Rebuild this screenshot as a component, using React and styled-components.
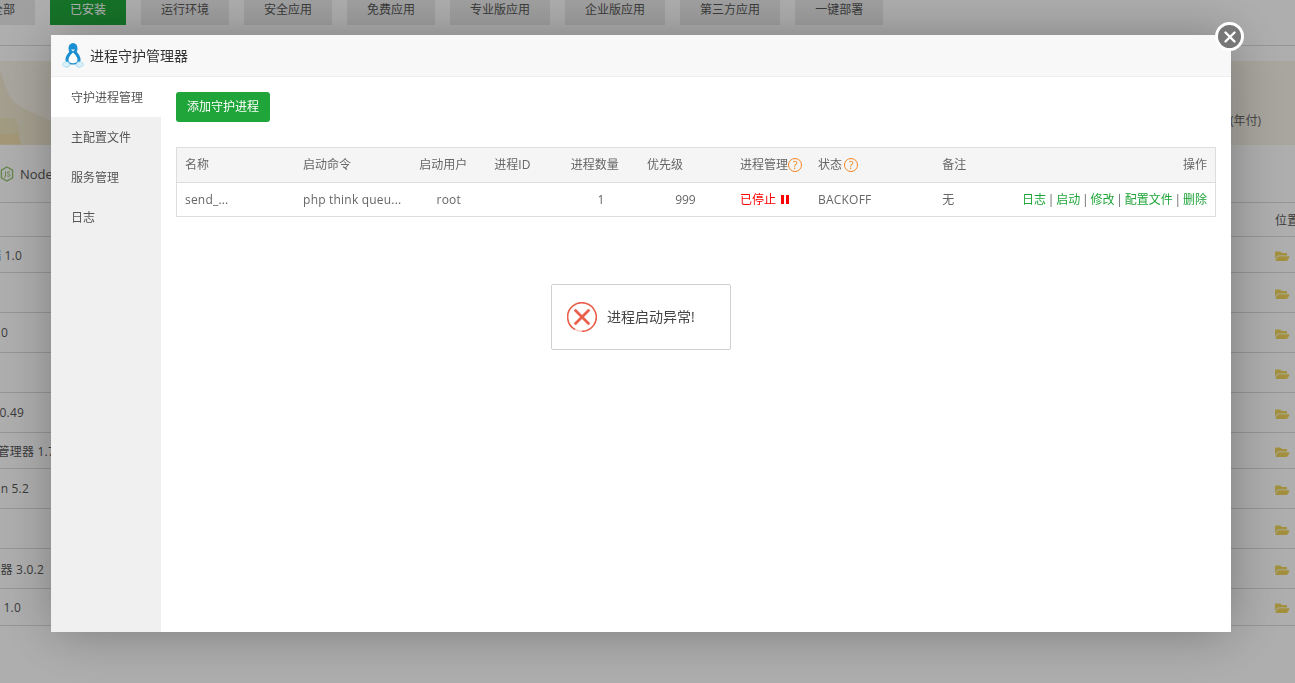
import React from 'react'
import styled, { createGlobalStyle } from 'styled-components'
import { FaFolderOpen } from 'react-icons/fa'

const GlobalStyle = createGlobalStyle`
  html, body {
    margin: 0;
    padding: 0;
    height: 100%;
    overflow: hidden;
    background: #fafafa;
    font-family: "Open Sans", "Noto Sans CJK SC", sans-serif;
    font-size: 12px;
    color: #666;
  }
  * { box-sizing: border-box; }
`;

const Page = styled.div`
  width: 1295px;
  height: 683px;
  overflow: hidden;
  background: #fafafa;
`;

const Tabs = styled.div`
  display: flex;
  gap: 15px;
  margin-left: -29px;
  height: 25px;
`;

const Tab = styled.div`
  padding: 0 20px;
  height: 25px;
  line-height: 20px;
  background: ${(props) => (props.$active ? '#20a53a' : '#e6e6e6')};
  color: ${(props) => (props.$active ? '#fff' : '#555')};
`;

const Rule = styled.div`
  height: 1px;
  margin-top: 20px;
  background: #d6d6d6;
`;

const Banner = styled.div`
  position: relative;
  height: 84px;
  margin-top: 15px;
  display: flex;
  justify-content: flex-end;
  align-items: center;
  padding: 34px 34px 0 0;
  color: #666;
  background: #f2eee4;
`;

const BannerArt = styled.svg`
  position: absolute;
  left: 0;
  top: 0;
`;

const PluginLine = styled.div`
  height: 58px;
  display: flex;
  align-items: center;
  gap: 6px;
  font-size: 13px;
  color: #555;
  border-bottom: 1px solid #d6d6d6;
`;

const Row = styled.div`
  height: ${(props) => props.$height}px;
  display: flex;
  justify-content: space-between;
  align-items: center;
  border-bottom: 1px solid #d6d6d6;
  font-size: 12px;
  letter-spacing: 0.2px;
  color: #555;
`;

const RowName = styled.div`
  width: ${(props) => props.$end}px;
  display: flex;
  justify-content: flex-end;
  white-space: nowrap;
`;

const RowEnd = styled.div`
  width: 20px;
  padding-top: 3px;
  overflow: hidden;
  white-space: nowrap;
  color: #e8cf58;
  display: flex;
`;

const HeadEnd = styled(RowEnd)`
  padding-top: 0;
  color: #555;
`;

const Overlay = styled.div`
  position: fixed;
  inset: 0;
  background: rgba(0, 0, 0, 0.3);
`;

const Modal = styled.div`
  position: fixed;
  left: 51px;
  top: 35px;
  width: 1180px;
  height: 597px;
  background: #fff;
  box-shadow: 1px 1px 50px rgba(0, 0, 0, 0.3);
  display: flex;
  flex-direction: column;
`;

const ModalTitle = styled.div`
  height: 42px;
  flex: none;
  display: flex;
  align-items: center;
  gap: 6px;
  padding-left: 11px;
  background: #f8f8f8;
  border-bottom: 1px solid #eee;
  font-size: 14px;
  color: #333;
`;

const TitleText = styled.span`
  margin-bottom: 2px;
`;

const CloseButton = styled.div`
  position: absolute;
  right: -13px;
  top: -13px;
  width: 29px;
  height: 29px;
  border-radius: 50%;
  background: #777;
  border: 3px solid #fff;
  display: flex;
  align-items: center;
  justify-content: center;
`;

const ModalBody = styled.div`
  flex: 1;
  display: flex;
  min-height: 0;
`;

const Side = styled.div`
  width: 110px;
  flex: none;
  background: #f0f0f0;
`;

const SideItem = styled.div`
  height: 40px;
  line-height: 42px;
  padding-left: 20px;
  color: #555;
  background: ${(props) => (props.$active ? '#fff' : 'transparent')};
`;

const Pane = styled.div`
  flex: 1;
  padding: 15px;
`;

const AddButton = styled.div`
  width: 94px;
  height: 30px;
  line-height: 30px;
  text-align: center;
  border-radius: 3px;
  background: #20a53a;
  color: #fff;
`;

const Table = styled.table`
  width: 1040px;
  margin-top: 25px;
  table-layout: fixed;
  border-collapse: collapse;
  border: 1px solid #ddd;
`;

const Col = styled.col`
  width: ${(props) => props.$w}px;
`;

const Th = styled.th`
  height: 35px;
  padding: 0 8px 2px;
  font-weight: 400;
  text-align: ${(props) => props.$align || 'left'};
  background: #f5f5f5;
  border-bottom: 1px solid #ddd;
  color: #666;
  white-space: nowrap;
`;

const Td = styled.td`
  height: 34px;
  padding: 0 8px 1px;
  text-align: ${(props) => props.$align || 'left'};
  letter-spacing: ${(props) => (props.$wide ? '0.2px' : '0')};
  color: #666;
  white-space: nowrap;
`;

const Help = styled.span`
  display: inline-block;
  width: 14px;
  height: 14px;
  margin-left: ${(props) => props.$gap}px;
  border: 1px solid #f5841f;
  border-radius: 50%;
  color: #f5841f;
  font-size: 11px;
  line-height: 12px;
  text-align: center;
  vertical-align: 0;
`;

const Stopped = styled.span`
  color: #f00;
  display: inline-flex;
  align-items: center;
  gap: 5px;
`;

const PauseBars = styled.i`
  display: inline-block;
  width: 8px;
  height: 9px;
  border-left: 3px solid #f00;
  border-right: 3px solid #f00;
`;

const Link = styled.a`
  color: #20a53a;
`;

const Sep = styled.span`
  display: inline-block;
  width: 10.25px;
  text-align: center;
  color: #666;
`;

const Toast = styled.div`
  position: absolute;
  left: 500px;
  top: 249px;
  width: 180px;
  height: 66px;
  display: flex;
  align-items: center;
  gap: 10px;
  padding-left: 15px;
  background: #fff;
  border: 1px solid #d0d0d0;
  border-radius: 2px;
  font-size: 14px;
  color: #444;
`;

const ToastText = styled.span`
  margin-bottom: 3px;
`;

const Penguin = () => (
  <svg width="22" height="25" viewBox="0 0 22 25">
    <path d="M11 5C7 9 3 13 3.500 17.500c.3 2.400 3 4 7.500 4s7.200-1.600 7.500-4C19 13 15 9 11 5z" fill="#1a8fd1" />
    <ellipse cx="11" cy="5.500" rx="4.500" ry="5.500" fill="#1a8fd1" />
    <path d="M11 9.500c-2.600 2.200-4.700 5-4.500 7.800.2 2 1.800 3 4.500 3s4.300-1 4.500-3c.2-2.800-1.900-5.600-4.500-7.800z" fill="#fff" />
    <path d="M9 6.500h4L11 8.500z" fill="#e8f6fc" />
    <path d="M0 21.500c2-2.800 5-3.300 6.500-2.300s1.500 3.800 0 4.800-5-.5-6.500-2.500zM22 21.500c-2-2.800-5-3.300-6.500-2.300s-1.500 3.800 0 4.800 5-.5 6.500-2.500z" fill="#d8f0fa" stroke="#8dcdea" strokeWidth="0.6" />
  </svg>
)

const NodeIcon = () => (
  <svg width="14" height="16" viewBox="0 0 14 16">
    <path d="M7 1l5.600 3.200v7.600L7 15l-5.600-3.200V4.200z" fill="none" stroke="#8cbf6a" strokeWidth="1.300" />
    <path d="M5.500 5.500v4.800c0 1-1 1-1.500.7M10 6.200C9 5.300 7.300 5.600 7.300 6.800s2.800 1 2.800 2.300-1.900 1.500-3 .6" fill="none" stroke="#8cbf6a" />
  </svg>
)

const CloseIcon = () => (
  <svg width="14" height="14" viewBox="0 0 14 14">
    <path d="M2.500 2.500l9 9M11.500 2.500l-9 9" stroke="#fff" strokeWidth="2.400" strokeLinecap="round" />
  </svg>
)

const ErrorIcon = () => (
  <svg width="30" height="30" viewBox="0 0 30 30">
    <path d="M8 27.500A14.300 14.300 0 1 1 15 29.300" fill="none" stroke="#e9604d" strokeWidth="1.600" />
    <path d="M8 27.500A14.300 14.300 0 0 0 15 29.300" fill="none" stroke="#f6c4bc" strokeWidth="1.400" />
    <path d="M8.500 8.500l13 13M21.500 8.500l-13 13" stroke="#e9604d" strokeWidth="2.800" strokeLinecap="round" />
  </svg>
)

const tabs = [
  { label: '全部' },
  { label: '已安装', active: true },
  { label: '运行环境' },
  { label: '安全应用' },
  { label: '免费应用' },
  { label: '专业版应用' },
  { label: '企业版应用' },
  { label: '第三方应用' },
  { label: '一键部署' },
]

const rows = [
  { text: '宝塔SSH终端 1.0', end: 22, height: 36 },
  { text: '', end: 0, height: 40 },
  { text: 'Redis 6.0', end: 8, height: 40 },
  { text: '', end: 0, height: 40 },
  { text: 'MariaDB 10.0.49', end: 24, height: 40 },
  { text: 'PHP管理器 1.7', end: 55, height: 36 },
  { text: 'phpMyAdmin 5.2', end: 29, height: 40 },
  { text: '', end: 0, height: 40 },
  { text: '进程管理器 3.0.2', end: 44, height: 40 },
  { text: '文件管理 1.0', end: 21, height: 37 },
]

const sideItems = ['守护进程管理', '主配置文件', '服务管理', '日志']

const columns = [118.5, 116, 75, 76.5, 76, 93, 78, 124, 60, 221]

const actions = ['日志', '启动', '修改', '配置文件', '删除']

const App = () => {
  return (
    <>
      <GlobalStyle />
      <Page>
        <Tabs>
          {tabs.map((tab) => (
            <Tab key={tab.label} $active={tab.active}>{tab.label}</Tab>
          ))}
        </Tabs>
        <Rule />
        <Banner>
          <BannerArt width="70" height="84" viewBox="0 0 70 84">
            <path d="M0 10C6 25 8 38 18 44c12 8 27 11 42 22v18H0z" fill="#ebe4cd" />
            <path d="M0 57h13c6 2 7 12 7 27H0z" fill="#e8dfbc" />
            <path d="M0 73h18l3 10H0z" fill="#ebd9ab" />
          </BannerArt>
          (年付)
        </Banner>
        <PluginLine>
          <NodeIcon />
          <span>Node</span>
        </PluginLine>
        <Row $height={34}>
          <span />
          <HeadEnd>位置</HeadEnd>
        </Row>
        {rows.map((row, i) => (
          <Row key={i} $height={row.height}>
            <RowName $end={row.end}>{row.text}</RowName>
            <RowEnd><FaFolderOpen size={14.5} /></RowEnd>
          </Row>
        ))}
      </Page>

      <Overlay />

      <Modal>
        <ModalTitle>
          <Penguin />
          <TitleText>进程守护管理器</TitleText>
        </ModalTitle>
        <CloseButton><CloseIcon /></CloseButton>
        <ModalBody>
          <Side>
            {sideItems.map((item, i) => (
              <SideItem key={item} $active={i === 0}>{item}</SideItem>
            ))}
          </Side>
          <Pane>
            <AddButton>添加守护进程</AddButton>
            <Table>
              <colgroup>
                {columns.map((w, i) => <Col key={i} $w={w} />)}
              </colgroup>
              <thead>
                <tr>
                  <Th>名称</Th>
                  <Th>启动命令</Th>
                  <Th>启动用户</Th>
                  <Th>进程ID</Th>
                  <Th>进程数量</Th>
                  <Th>优先级</Th>
                  <Th>进程管理<Help $gap={0}>?</Help></Th>
                  <Th>状态<Help $gap={2}>?</Help></Th>
                  <Th>备注</Th>
                  <Th $align="right">操作</Th>
                </tr>
              </thead>
              <tbody>
                <tr>
                  <Td $wide>send_...</Td>
                  <Td $wide>php think queu...</Td>
                  <Td $align="center" $wide>root</Td>
                  <Td></Td>
                  <Td $align="center">1</Td>
                  <Td $align="center">999</Td>
                  <Td><Stopped>已停止<PauseBars /></Stopped></Td>
                  <Td $wide>BACKOFF</Td>
                  <Td>无</Td>
                  <Td $align="right">
                    {actions.map((action, i) => (
                      <React.Fragment key={action}>
                        {i > 0 && <Sep>|</Sep>}
                        <Link>{action}</Link>
                      </React.Fragment>
                    ))}
                  </Td>
                </tr>
              </tbody>
            </Table>
          </Pane>
        </ModalBody>
        <Toast>
          <ErrorIcon />
          <ToastText>进程启动异常!</ToastText>
        </Toast>
      </Modal>
    </>
  )
}

export default App
